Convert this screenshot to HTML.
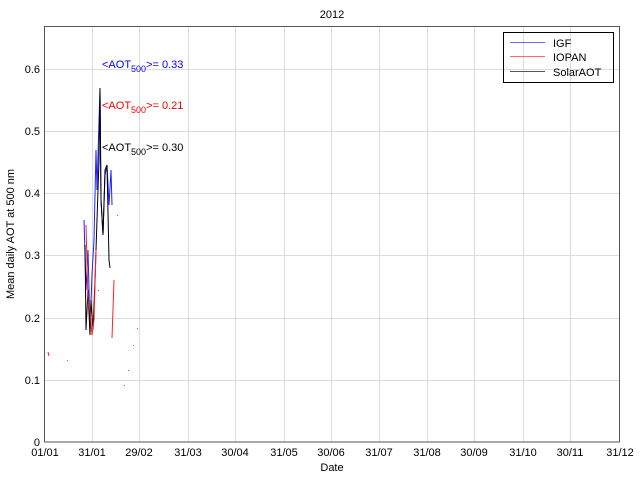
<!DOCTYPE html><html><head><style>body{margin:0;background:#fff}svg{display:block}text{font-family:"Liberation Sans",sans-serif;font-size:11px}</style></head><body>
<svg width="640" height="480" xmlns="http://www.w3.org/2000/svg">
<rect width="640" height="480" fill="#fff"/>
<g stroke="#dcdcdc" stroke-width="1">
<line x1="92.5" y1="26" x2="92.5" y2="442"/><line x1="139.5" y1="26" x2="139.5" y2="442"/><line x1="188.5" y1="26" x2="188.5" y2="442"/><line x1="235.5" y1="26" x2="235.5" y2="442"/><line x1="284.5" y1="26" x2="284.5" y2="442"/><line x1="331.5" y1="26" x2="331.5" y2="442"/><line x1="379.5" y1="26" x2="379.5" y2="442"/><line x1="427.5" y1="26" x2="427.5" y2="442"/><line x1="474.5" y1="26" x2="474.5" y2="442"/><line x1="523.5" y1="26" x2="523.5" y2="442"/><line x1="570.5" y1="26" x2="570.5" y2="442"/>
<line x1="45" y1="380.5" x2="620" y2="380.5"/><line x1="45" y1="318.5" x2="620" y2="318.5"/><line x1="45" y1="255.5" x2="620" y2="255.5"/><line x1="45" y1="193.5" x2="620" y2="193.5"/><line x1="45" y1="131.5" x2="620" y2="131.5"/><line x1="45" y1="69.5" x2="620" y2="69.5"/>
</g>
<rect x="44.5" y="26.5" width="575" height="415.5" fill="none" stroke="#555"/>
<g fill="none" stroke-width="1">
<polyline stroke="#2020ff" points="84,220 86,290 88,250 90,330 92,275 94,240 96,150 97,190 99,120 100,90 101,200 103,235 105,175 107,165 109,205 111,170 112,205"/>
<polyline stroke="#000" points="85,245 86,330 88,290 90,335 91,300 93,330 95,280 97,220 99,160 100,88 101,200 103,235 105,170 107,165 109,260 110,268"/>
<polyline stroke="#ff2020" points="86,225 88,300 90,310 92,335 94,320 96,250"/>
<polyline stroke="#ff2020" points="114,280 112,338"/>
<polyline stroke="#ff2020" points="48,352 49,356"/>
</g>
<g fill="#f44"><rect x="67" y="360" width="1" height="1"/><rect x="124" y="385" width="1" height="1"/><rect x="128" y="370" width="1" height="1"/><rect x="133" y="345" width="1" height="1"/><rect x="137" y="328" width="1" height="1"/><rect x="117" y="215" width="1" height="1"/><rect x="98" y="290" width="1" height="1"/></g>
<line x1="510" y1="42.5" x2="545" y2="42.5" stroke="#6a6aff"/>
<line x1="510" y1="56.5" x2="545" y2="56.5" stroke="#ff6a6a"/>
<line x1="510" y1="71.5" x2="545" y2="71.5" stroke="#555"/>
<rect x="503.5" y="32.5" width="110" height="50" fill="none" stroke="#000"/>
<text x="553" y="47">IGF</text><text x="553" y="61">IOPAN</text><text x="553" y="76">SolarAOT</text>
<text x="102" y="68" fill="#0000ff" font-size="12">&lt;AOT<tspan font-size="9" dy="4">500</tspan><tspan dy="-4">&gt;= 0.33</tspan></text>
<text x="102" y="109" fill="#ff0000" font-size="12">&lt;AOT<tspan font-size="9" dy="4">500</tspan><tspan dy="-4">&gt;= 0.21</tspan></text>
<text x="102" y="151" fill="#000" font-size="12">&lt;AOT<tspan font-size="9" dy="4">500</tspan><tspan dy="-4">&gt;= 0.30</tspan></text>
<text x="332" y="18" text-anchor="middle">2012</text>
<g text-anchor="end"><text x="40" y="446">0</text><text x="40" y="384">0.1</text><text x="40" y="322">0.2</text><text x="40" y="259">0.3</text><text x="40" y="197">0.4</text><text x="40" y="135">0.5</text><text x="40" y="73">0.6</text></g>
<g text-anchor="middle"><text x="45" y="456">01/01</text><text x="92" y="456">31/01</text><text x="139" y="456">29/02</text><text x="188" y="456">31/03</text><text x="235" y="456">30/04</text><text x="284" y="456">31/05</text><text x="331" y="456">30/06</text><text x="379" y="456">31/07</text><text x="427" y="456">31/08</text><text x="474" y="456">30/09</text><text x="523" y="456">31/10</text><text x="570" y="456">30/11</text><text x="620" y="456">31/12</text>
<text x="332" y="471">Date</text>
<text transform="translate(14,234) rotate(-90)">Mean daily AOT at 500 nm</text></g>
</svg></body></html>
